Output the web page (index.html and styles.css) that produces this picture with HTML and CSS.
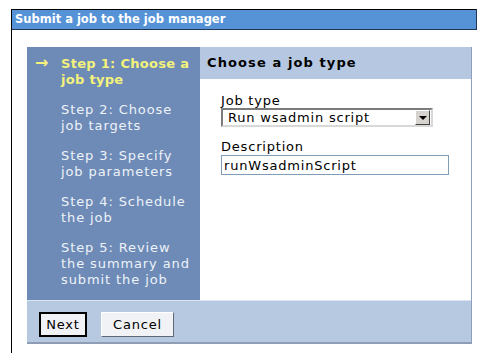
FILE: index.html
```html
<!DOCTYPE html>
<html lang="en">
<head>
  <meta charset="UTF-8" />
  <title>Submit a job</title>
  <link rel="stylesheet" href="styles.css">
</head>
<body>
  <div class="window">
    <div class="titlebar">Submit a job to the job manager</div>

    <div class="window-body">
      <div class="wizard">
        <ul class="steps">
          <li class="current"><span class="arrow">&rarr;</span>Step 1: Choose a<br>job type</li>
          <li>Step 2: Choose<br>job targets</li>
          <li>Step 3: Specify<br>job parameters</li>
          <li>Step 4: Schedule<br>the job</li>
          <li>Step 5: Review<br>the summary and<br>submit the job</li>
        </ul>

        <div class="main">
          <h2>Choose a job type</h2>
          <div class="form">
            <label class="field-label">Job type</label>
            <div class="select">
              <span class="select-value">Run wsadmin script</span>
              <span class="select-btn"><span class="tri"></span></span>
            </div>

            <label class="field-label" for="desc">Description</label>
            <input type="text" id="desc" class="text-input" value="runWsadminScript" />
          </div>
        </div>

        <div class="footer">
          <button class="btn default">Next</button>
          <button class="btn">Cancel</button>
        </div>
      </div>
    </div>
  </div>
</body>
</html>
```

FILE: styles.css
```css
body {
  margin: 0;
  padding: 9px 0 0 11px;
  background: #fff;
  font-family: "DejaVu Sans", Verdana, sans-serif;
}

.window {
  width: 465px;
  height: 344px;
  border-left: 1px solid #000;
}

.titlebar {
  background: #5593d6;
  color: #fff;
  font-weight: bold;
  font-size: 11.5px;
  height: 19px;
  line-height: 19px;
  padding-left: 3px;
  border-top: 1px solid #000;
  border-bottom: 1px solid #1e3553;
  border-right: 1px solid #23395a;
}

.window-body {
  padding: 17px 0 0 15px;
}

.wizard {
  display: grid;
  grid-template-columns: 173px 271px;
  grid-template-rows: 253px 42px;
  border-right: 1px solid #8e9fbb;
  border-bottom: 2px solid #8e9cb4;
  width: 444px;
}

.steps {
  list-style: none;
  margin: 0;
  padding: 9px 0 0 34px;
  background: #6d8bb6;
  color: #eef2f9;
  font-size: 13px;
  line-height: 16px;
  letter-spacing: 0.9px;
  white-space: nowrap;
}

.steps li {
  margin-bottom: 14px;
  position: relative;
}

.steps li.current {
  color: #f4f27c;
  font-weight: bold;
  letter-spacing: 0.3px;
}

.arrow {
  position: absolute;
  left: -26px;
  top: -1px;
  font-size: 16px;
  font-weight: bold;
}

.main {
  background: #fff;
}

.main h2 {
  margin: 0;
  background: #b6c8e1;
  font-size: 13px;
  height: 32px;
  line-height: 32px;
  padding-left: 7px;
  color: #000;
  letter-spacing: 1.1px;
}

.form {
  padding: 14px 0 0 21px;
  font-size: 13px;
  letter-spacing: 0.8px;
}

.field-label {
  display: block;
  line-height: 15px;
  color: #000;
}

.select {
  display: flex;
  align-items: center;
  width: 208px;
  height: 15px;
  margin: 0 0 12px 0;
  border: 2px solid;
  border-color: #7b7b7b #d8d8d8 #d8d8d8 #7b7b7b;
  background: #fff;
}

.select-value {
  flex: 1;
  padding-left: 5px;
  line-height: 15px;
}

.select-btn {
  width: 13px;
  height: 13px;
  margin-right: 1px;
  background: #d6d3ce;
  border: 1px solid;
  border-color: #fff #404040 #404040 #fff;
  display: flex;
  align-items: center;
  justify-content: center;
}

.tri {
  width: 0;
  height: 0;
  border-left: 4px solid transparent;
  border-right: 4px solid transparent;
  border-top: 4px solid #000;
}

.text-input {
  display: block;
  margin: 1px 0 0 0;
  width: 228px;
  height: 20px;
  box-sizing: border-box;
  padding: 0 2px;
  border: 1px solid #7f9db9;
  font-family: inherit;
  font-size: 13px;
  letter-spacing: 0.8px;
  color: #000;
}

.footer {
  grid-column: 1 / 3;
  background: #b7c8e1;
  border-top: 1px solid #dbe3ef;
  padding: 11px 0 0 12px;
  display: flex;
  gap: 14px;
  align-items: flex-start;
}

.btn {
  font-family: inherit;
  font-size: 13px;
  letter-spacing: 0.8px;
  height: 25px;
  padding: 0 6px;
  background: #f1f2f6;
  color: #000;
  border: 1px solid;
  border-color: #fff #5f6878 #5f6878 #fff;
}

.btn.default {
  border: 2px solid #000;
  padding: 0 2px;
  width: 48px;
}

.btn:not(.default) {
  width: 73px;
}
```
